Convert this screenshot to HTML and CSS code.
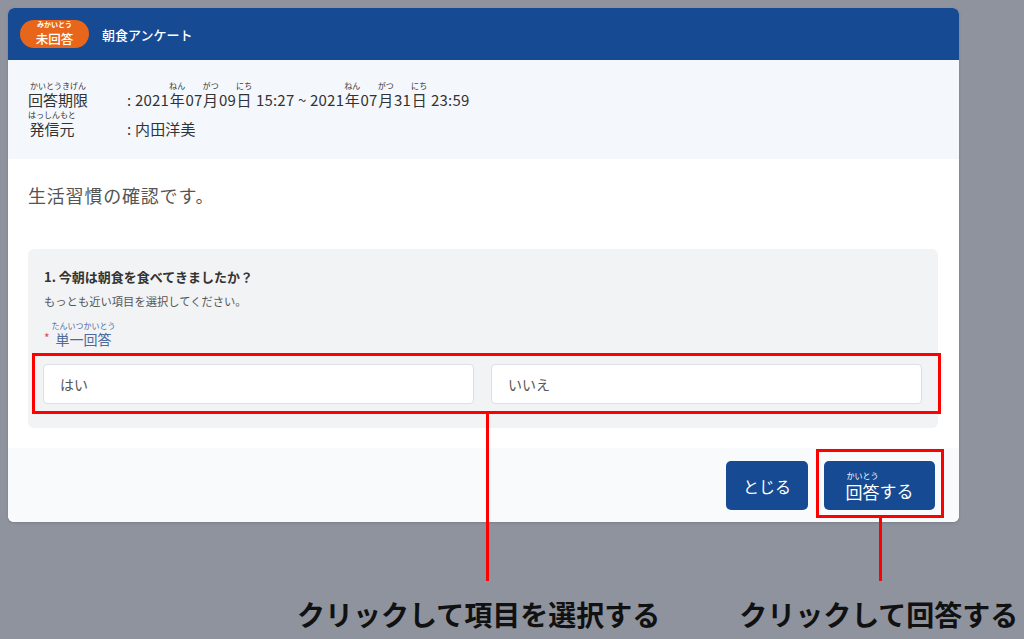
FILE: index.html
```html
<!DOCTYPE html>
<html lang="ja">
<head>
<meta charset="utf-8">
<title>朝食アンケート</title>
<link rel="stylesheet" href="styles.css">
</head>
<body>
<div class="page">
  <div class="modal">
    <header class="modal-header">
      <span class="badge"><ruby>未回答<rt>みかいとう</rt></ruby></span>
      <h1 class="title">朝食アンケート</h1>
    </header>
    <section class="info">
      <div class="info-row">
        <span class="info-label"><ruby>回答期限<rt>かいとうきげん</rt></ruby></span>
        <span class="info-value">: 2021<ruby>年<rt>ねん</rt></ruby>07<ruby>月<rt>がつ</rt></ruby>09<ruby>日<rt>にち</rt></ruby> 15:27 ~ 2021<ruby>年<rt>ねん</rt></ruby>07<ruby>月<rt>がつ</rt></ruby>31<ruby>日<rt>にち</rt></ruby> 23:59</span>
      </div>
      <div class="info-row">
        <span class="info-label"><ruby>発信元<rt>はっしんもと</rt></ruby></span>
        <span class="info-value">: 内田洋美</span>
      </div>
    </section>
    <section class="content">
      <p class="description">生活習慣の確認です。</p>
      <div class="question">
        <h2 class="q-title">1. 今朝は朝食を食べてきましたか？</h2>
        <p class="q-sub">もっとも近い項目を選択してください。</p>
        <div class="q-type"><span class="star">*</span><ruby>単一回答<rt>たんいつかいとう</rt></ruby></div>
        <div class="options">
          <div class="option">はい</div>
          <div class="option">いいえ</div>
        </div>
        <span class="callout callout-options"><span class="pointer pointer-options"></span></span>
      </div>
    </section>
    <footer class="modal-footer">
      <button class="btn">とじる</button>
      <button class="btn btn-answer"><ruby>回答<rt>かいとう</rt></ruby>する<span class="callout callout-answer"><span class="pointer pointer-answer"></span></span></button>
    </footer>
  </div>
  <div class="captions">
    <p class="caption">クリックして項目を選択する</p>
    <p class="caption">クリックして回答する</p>
  </div>
</div>
</body>
</html>
```

FILE: styles.css
```css
* { box-sizing: border-box; }

html, body {
  margin: 0;
  height: 100%;
}

body {
  background: #8e939e;
  font-family: "Noto Sans CJK JP", "Noto Sans", sans-serif;
  color: #333;
  overflow: hidden;
}

.page {
  padding: 8px;
  width: 1024px;
  height: 639px;
}

.modal {
  width: 951px;
  background: #ffffff;
  border-radius: 6px;
  box-shadow: 0 1px 3px rgba(0,0,0,0.15);
}

/* furigana: annotation stacked above the base text */
ruby {
  display: inline-flex;
  flex-direction: column-reverse;
  align-items: center;
  vertical-align: bottom;
  line-height: 1.2;
}

ruby rt {
  display: block;
  font-size: 8px;
  line-height: 9px;
  margin-bottom: 1px;
  white-space: nowrap;
}

.modal-header {
  height: 52px;
  background: #164a93;
  border-radius: 6px 6px 0 0;
  display: flex;
  align-items: center;
  padding: 0 12px;
  gap: 13px;
}

.badge {
  width: 69px;
  height: 28px;
  border-radius: 14px;
  background: #e8661b;
  color: #fff;
  font-size: 12.5px;
  font-weight: 500;
  display: flex;
  align-items: flex-end;
  justify-content: center;
  padding-bottom: 1px;
}

.badge ruby {
  line-height: 17px;
}

.badge rt {
  font-size: 7px;
  line-height: 8px;
  margin-bottom: 2px;
  font-weight: 700;
}

.title {
  margin: 0;
  color: #fff;
  font-size: 13px;
  font-weight: 500;
}

.info {
  background: #f4f8fd;
  padding: 20px 20px 21px;
  font-size: 15px;
}

.info-row {
  display: flex;
  align-items: flex-end;
  height: 29px;
  line-height: 19px;
}

.info-label {
  width: 99px;
  flex: none;
}

.info-value {
  letter-spacing: 0.2px;
}

.content {
  padding: 0 21px 20px 20px;
}

.description {
  margin: 24px 0 0;
  font-size: 18px;
  letter-spacing: 0.8px;
  line-height: 24px;
  color: #555;
}

.question {
  position: relative;
  margin-top: 42px;
  background: #f2f3f5;
  border-radius: 6px;
  padding: 18px 16px 24px 15px;
}

.q-title {
  margin: 0 0 0 1px;
  font-size: 13px;
  font-weight: 700;
  line-height: 20px;
  color: #333;
}

.q-sub {
  margin: 5px 0 0 1px;
  font-size: 11.3px;
  line-height: 18px;
  color: #555;
}

.q-type {
  margin: 8px 0 0 1px;
  display: flex;
  align-items: flex-end;
  gap: 2px;
  height: 30px;
  line-height: 20px;
  font-size: 14px;
  color: #4f6a9c;
}

.q-type .star {
  color: #e24a4a;
  font-size: 12px;
}

.options {
  margin-top: 16px;
  display: grid;
  grid-template-columns: 1fr 1fr;
  gap: 17px;
}

.option {
  height: 40px;
  background: #fff;
  border: 1px solid #dcdfe5;
  border-radius: 4px;
  padding-left: 16px;
  display: flex;
  align-items: center;
  font-size: 14px;
  color: #555;
}

.modal-footer {
  background: #f9fafc;
  border-radius: 0 0 6px 6px;
  padding: 13px 24px 12px;
  display: flex;
  justify-content: flex-end;
  gap: 16px;
}

.btn {
  position: relative;
  height: 49px;
  border: none;
  border-radius: 5px;
  background: #164a93;
  color: #fff;
  font-family: inherit;
  font-size: 16px;
  padding: 0;
  display: flex;
  align-items: center;
  justify-content: center;
  width: 82px;
  white-space: nowrap;
}

.btn-answer {
  width: 111px;
  font-size: 17px;
  align-items: flex-end;
  padding-bottom: 8px;
  line-height: 22px;
}

.btn-answer ruby {
  line-height: 21px;
}

.btn-answer rt {
  font-size: 8px;
  margin-bottom: 1px;
}

.callout {
  position: absolute;
  border: 3px solid #ff0000;
  pointer-events: none;
}

.callout-options {
  left: 4px;
  top: 104px;
  width: 909px;
  height: 61px;
}

.callout-answer {
  left: -8px;
  top: -12px;
  right: -9px;
  bottom: -8px;
}

.pointer {
  position: absolute;
  top: 100%;
  width: 3px;
  background: #ff0000;
}

.pointer-options {
  left: 451px;
  height: 170px;
}

.pointer-answer {
  left: 60px;
  height: 66px;
}

.captions {
  margin-top: 74px;
  display: flex;
  padding-left: 289px;
  gap: 79px;
}

.caption {
  margin: 0;
  font-size: 28px;
  line-height: 36px;
  font-weight: 700;
  color: #111;
  white-space: nowrap;
}
```
